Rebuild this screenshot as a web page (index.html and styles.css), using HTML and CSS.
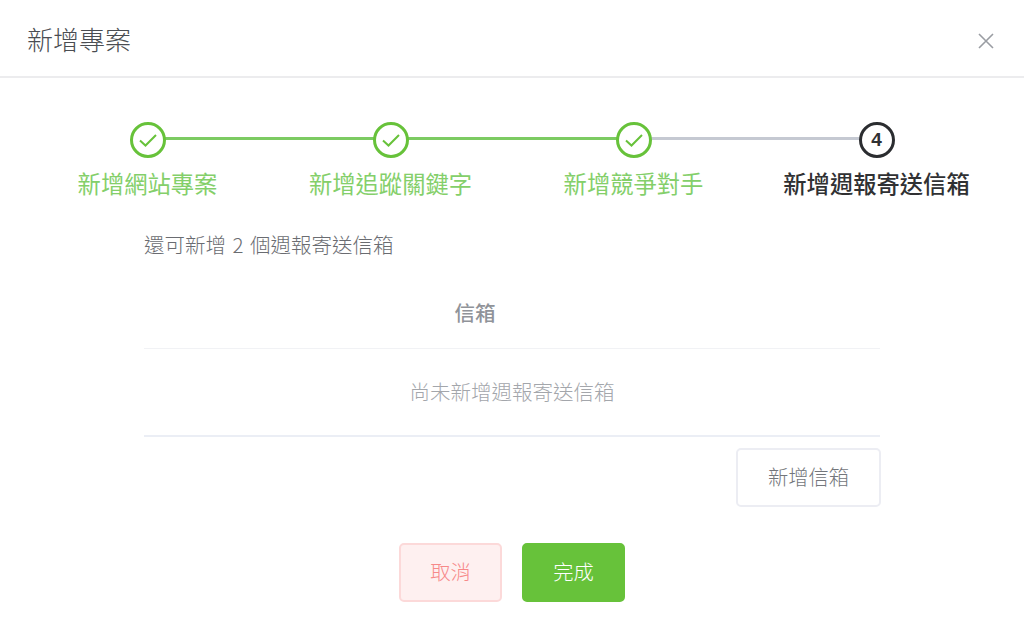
FILE: index.html
```html
<!DOCTYPE html>
<html lang="zh-Hant">
<head>
<meta charset="utf-8">
<title>新增專案</title>
<link rel="stylesheet" href="styles.css">
</head>
<body>
<div class="modal">
  <header class="modal-header">
    <h1 class="modal-title">新增專案</h1>
    <svg class="close" viewBox="0 0 16 16" width="16" height="16"><path d="M1 1L15 15M15 1L1 15"/></svg>
  </header>
  <main class="modal-body">
    <ol class="steps">
      <li class="step done">
        <span class="dot"><svg viewBox="0 0 20 20" width="20" height="20"><path d="M2 10.5L7.5 15.5L18 5"/></svg></span>
        <span class="label">新增網站專案</span>
      </li>
      <li class="step done">
        <span class="dot"><svg viewBox="0 0 20 20" width="20" height="20"><path d="M2 10.5L7.5 15.5L18 5"/></svg></span>
        <span class="label">新增追蹤關鍵字</span>
      </li>
      <li class="step done pending-line">
        <span class="dot"><svg viewBox="0 0 20 20" width="20" height="20"><path d="M2 10.5L7.5 15.5L18 5"/></svg></span>
        <span class="label">新增競爭對手</span>
      </li>
      <li class="step current">
        <span class="dot">4</span>
        <span class="label">新增週報寄送信箱</span>
      </li>
    </ol>
    <section class="content">
      <p class="hint">還可新增 2 個週報寄送信箱</p>
      <div class="table-head">信箱</div>
      <div class="table-empty">尚未新增週報寄送信箱</div>
      <div class="add-row"><button class="btn btn-add">新增信箱</button></div>
    </section>
    <div class="actions">
      <button class="btn btn-cancel">取消</button>
      <button class="btn btn-done">完成</button>
    </div>
  </main>
</div>
</body>
</html>
```
FILE: styles.css
```css
* { box-sizing: border-box; }
html, body { margin: 0; padding: 0; background: #fff; }
body {
  width: 1024px;
  height: 631px;
  overflow: hidden;
  font-family: "Noto Sans CJK TC", "Noto Sans", sans-serif;
  font-weight: 300;
}
.modal-header {
  height: 78px;
  border-bottom: 2px solid #ececee;
  display: flex;
  align-items: center;
  justify-content: space-between;
  padding: 0 30px 0 27px;
}
.modal-title {
  margin: 0;
  font-size: 26px;
  font-weight: 300;
  color: #4a4d52;
}
.close { display: block; margin-top: 6px; }
.close path { stroke: #9a9da3; stroke-width: 1.6; fill: none; }
.steps {
  list-style: none;
  margin: 0;
  padding: 44px 0 0 26px;
  display: flex;
}
.step {
  position: relative;
  width: 243px;
  display: flex;
  flex-direction: column;
  align-items: center;
}
.step.done::after {
  content: "";
  position: absolute;
  left: 50%;
  top: 15px;
  width: 243px;
  height: 3px;
  background: #7ccb62;
}
.step.pending-line::after { background: #c5c9d2; }
.dot {
  position: relative;
  z-index: 1;
  width: 36px;
  height: 36px;
  border-radius: 50%;
  border: 3px solid #67c23a;
  background: #fff;
  display: flex;
  align-items: center;
  justify-content: center;
  color: #303133;
  font-family: "Liberation Sans", sans-serif;
  font-weight: 700;
  font-size: 19px;
}
.dot svg path { stroke: #67c23a; stroke-width: 2; fill: none; }
.step.current .dot { border-color: #2b2d30; }
.label {
  margin-top: 8px;
  font-size: 23.3px;
  line-height: 34px;
  white-space: nowrap;
  color: #84cf6a;
  font-weight: 400;
}
.step.current .label { color: #303133; font-weight: 500; }
.content { margin: 0 144px; }
.hint {
  margin: 27px 0 0;
  font-size: 20.5px;
  line-height: 34px;
  word-spacing: 2px;
  color: #6a6c71;
}
.table-head {
  margin-top: 32px;
  height: 56px;
  padding: 2px 74px 0 0;
  border-bottom: 1px solid #f1f2f5;
  text-align: center;
  font-size: 20.5px;
  line-height: 34px;
  font-weight: 500;
  color: #909399;
}
.table-empty {
  height: 88px;
  border-bottom: 2px solid #ebeef5;
  text-align: center;
  font-size: 20.5px;
  line-height: 84px;
  color: #a3a6ab;
}
.add-row {
  margin: 11px -1px 0 0;
  display: flex;
  justify-content: flex-end;
}
.btn {
  font-family: inherit;
  font-size: 20.3px;
  font-weight: 300;
  border-radius: 5px;
  padding: 0 0 3px;
  height: 59px;
}
.btn-add {
  width: 145px;
  background: #fff;
  border: 2px solid #ecedf3;
  color: #73767b;
}
.actions {
  margin-top: 36px;
  display: flex;
  justify-content: center;
  gap: 20px;
}
.btn-cancel, .btn-done { width: 103px; }
.btn-cancel {
  background: #fef0f0;
  border: 2px solid #fcd9d9;
  color: #f78989;
}
.btn-done {
  background: #67c23a;
  border: 2px solid #67c23a;
  color: #fff;
}
```
